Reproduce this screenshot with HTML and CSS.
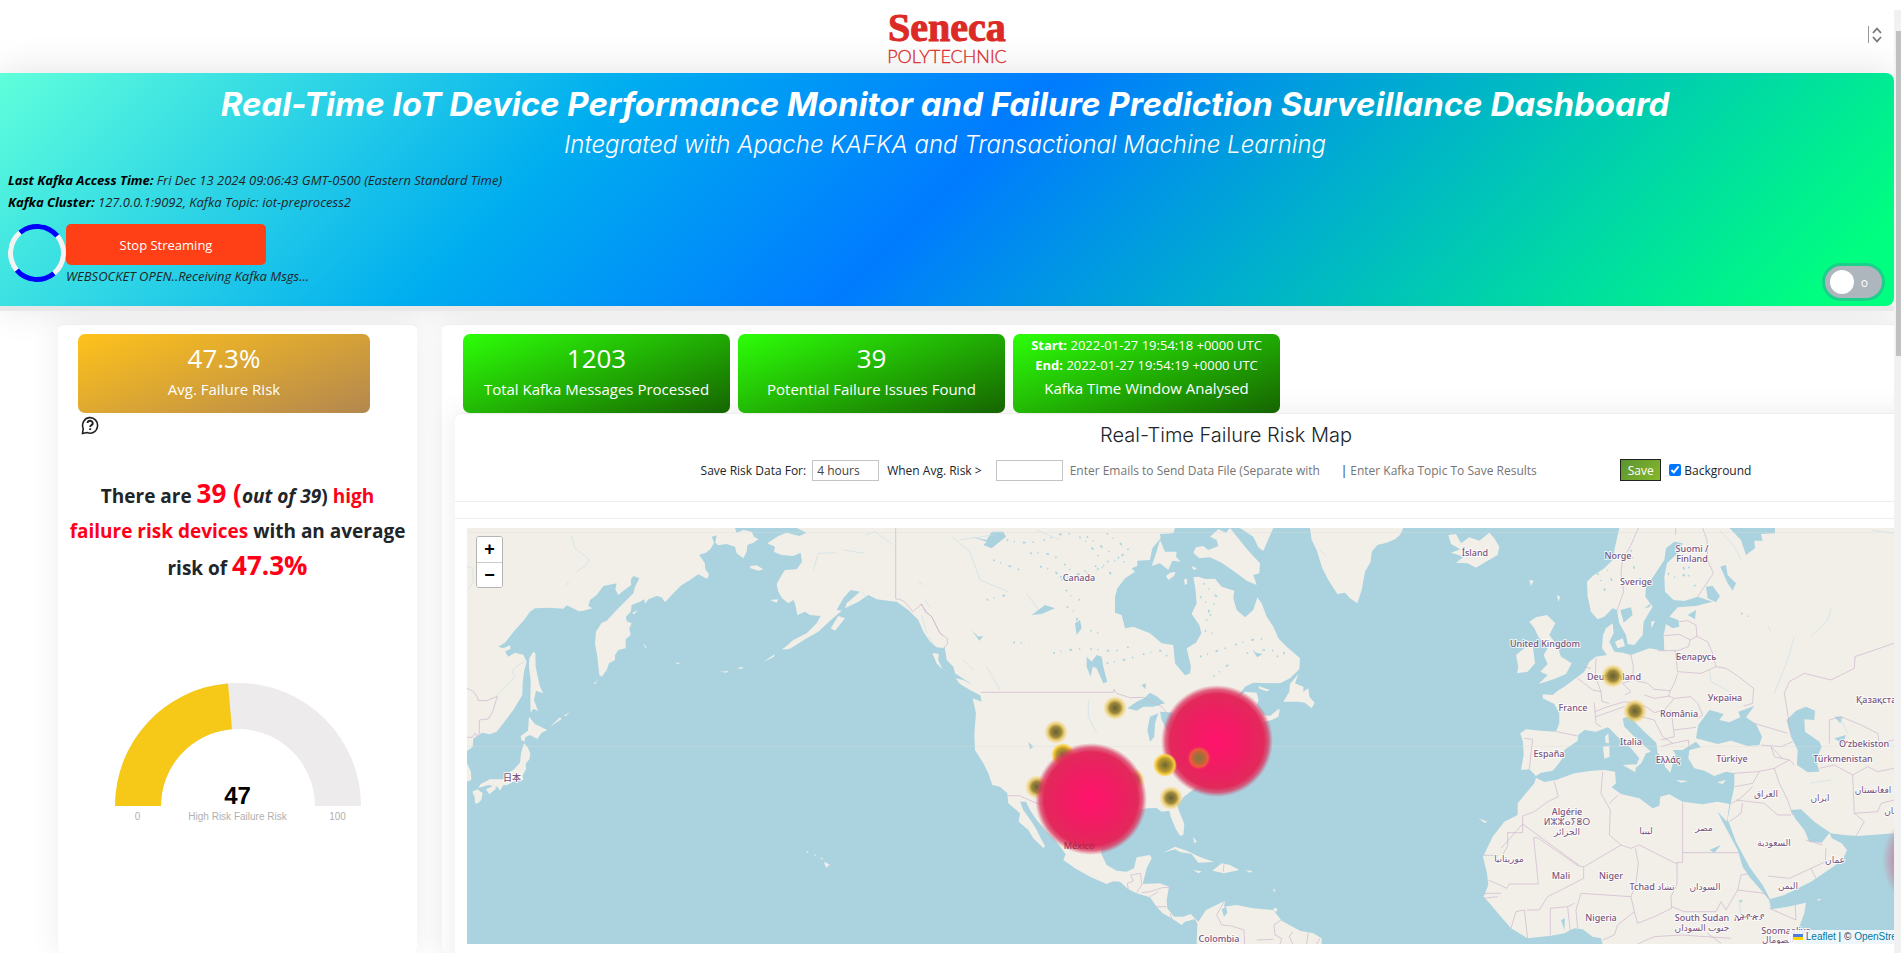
FILE: index.html
```html
<!DOCTYPE html>
<html lang="en">
<head>
<meta charset="utf-8">
<title>Real-Time IoT Device Performance Monitor</title>
<link rel="stylesheet" href="styles.css">
</head>
<body>
<div class="page">
<header class="topbar">
  <div class="logo"><span class="logo-name">Seneca</span><span class="logo-sub">POLYTECHNIC</span></div>
  <button class="sorter" aria-label="Toggle header">
    <svg width="15" height="18" viewBox="0 0 15 18" fill="none" stroke="#777"><path d="M1.500 0v17" stroke="#999"/><path d="M6 7 10 2.500 14 7M6 11 10 15.500 14 11" stroke-width="1.800"/></svg>
  </button>
</header>

<section class="banner">
  <h1>Real-Time IoT Device Performance Monitor and Failure Prediction Surveillance Dashboard</h1>
  <h2>Integrated with Apache KAFKA and Transactional Machine Learning</h2>
  <p class="meta"><b>Last Kafka Access Time:</b> Fri Dec 13 2024 09:06:43 GMT-0500 (Eastern Standard Time)</p>
  <p class="meta"><b>Kafka Cluster:</b> 127.0.0.1:9092, Kafka Topic: iot-preprocess2</p>
  <div class="stream">
    <span class="spinner"></span>
    <div>
      <button class="stop">Stop Streaming</button>
      <p class="status">WEBSOCKET OPEN..Receiving Kafka Msgs...</p>
    </div>
    <button class="toggle" role="switch" aria-checked="false" aria-label="Auto mode"><span class="knob"></span><span>o</span></button>
  </div>
</section>
<div class="strip"></div>

<main class="columns">
  <aside class="card side">
    <div class="tile amber"><strong>47.3%</strong><span>Avg. Failure Risk</span></div>
    <svg class="help" width="18" height="19" viewBox="0 0 18 19" fill="none" stroke="#222" stroke-width="1.600"><path d="M1.500 17.500 2.200 12.500A7.500 7.800 0 1 1 6 16.500Z"/><path d="M6.500 7a2.600 2.400 0 1 1 3.600 2.300Q9.200 9.700 9.200 11M9.200 12.200v1.800" stroke-width="1.900"/></svg>
    <p class="summary">There are <span class="hot big">39 (</span><i>out of 39</i>) <span class="hot">high<br>failure risk devices</span> with an average<br>risk of <span class="hot big">47.3%</span></p>
    <div class="gauge">
      <svg width="248" height="124" viewBox="0 0 248 124">
        <path d="M1 124A123 123 0 0 1 247 124H201A77 77 0 0 0 47 124Z" fill="#edebeb"/>
        <path d="M1 124A123 123 0 0 1 114 1.400L118 47.200A77 77 0 0 0 47 124Z" fill="#f6c918"/>
      </svg>
      <b>47</b>
      <div class="scale"><span>0</span><span>High Risk Failure Risk</span><span>100</span></div>
    </div>
  </aside>

  <section class="card panel">
    <div class="tiles">
      <div class="tile green"><strong>1203</strong><span>Total Kafka Messages Processed</span></div>
      <div class="tile green"><strong>39</strong><span>Potential Failure Issues Found</span></div>
      <div class="tile green window"><small><b>Start:</b> 2022-01-27 19:54:18 +0000 UTC</small><small><b>End:</b> 2022-01-27 19:54:19 +0000 UTC</small><span>Kafka Time Window Analysed</span></div>
    </div>
    <div class="card mapcard">
      <h3>Real-Time Failure Risk Map</h3>
      <form class="saver">
        <label for="hours">Save Risk Data For:</label>
        <select id="hours" class="box"><option>4 hours</option></select>
        <label class="when" for="risk">When Avg. Risk &gt;</label>
        <input id="risk" class="box" type="text">
        <input class="plain emails" type="text" aria-label="Emails" placeholder="Enter Emails to Send Data File (Separate with">
        <span class="bar">|</span>
        <input class="plain topic" type="text" aria-label="Kafka topic" placeholder="Enter Kafka Topic To Save Results">
        <button class="save" type="button">Save</button>
        <input id="bg" type="checkbox" checked><label for="bg">Background</label>
      </form>
      <div class="rule"></div>
      <div class="map">
        <svg class="world" width="1518" height="416">
          <defs>
            <radialGradient id="hot"><stop offset="0" stop-color="#ff136c"/><stop offset=".5" stop-color="#ef1d62"/><stop offset=".84" stop-color="#e2295b"/><stop offset=".92" stop-color="#dc345e" stop-opacity=".75"/><stop offset="1" stop-color="#d84a6c" stop-opacity="0"/></radialGradient>
            <radialGradient id="faint"><stop offset="0" stop-color="#d8346a"/><stop offset=".6" stop-color="#d8346a" stop-opacity=".8"/><stop offset="1" stop-color="#d84a6c" stop-opacity="0"/></radialGradient>
            <radialGradient id="warm"><stop offset="0" stop-color="#665f35"/><stop offset=".45" stop-color="#9c8838"/><stop offset=".7" stop-color="#e8c65c" stop-opacity=".8"/><stop offset="1" stop-color="#f8d468" stop-opacity="0"/></radialGradient>
            <radialGradient id="bright"><stop offset="0" stop-color="#6f6631"/><stop offset=".55" stop-color="#b8982c"/><stop offset=".8" stop-color="#fbce3c"/><stop offset="1" stop-color="#f8d468" stop-opacity="0"/></radialGradient>
            <radialGradient id="ember"><stop offset="0" stop-color="#7a7a38"/><stop offset=".45" stop-color="#b5683a"/><stop offset=".75" stop-color="#f05a3c"/><stop offset="1" stop-color="#f0305c" stop-opacity="0"/></radialGradient>
          </defs>
          <g transform="scale(.33333) translate(-21 -24)">
            <g class="land">
              <path d="M21 24H825L830 38 850 30 875 35 882 50 896 58 880 68 862 75 860 95 850 115 830 100 825 80 800 72 775 76 766 68 770 46 755 50 762 68 752 86 738 98 718 104 722 112 734 128 736 148 747 162 742 177 715 163 690 180 664 196 640 220 615 247 605 232 590 228 565 238 555 251 553 238 540 245 515 255 512 275 498 290 500 304 515 310 508 325 512 345 497 358 497 385 475 390 465 405 465 420 447 430 440 450 425 470 418 465 412 410 405 370 408 335 425 308 440 302 465 275 490 250 520 220 525 200 538 175 520 168 512 180 514 195 490 212 475 225 466 208 470 190 430 198 410 225 390 240 385 258 398 265 370 272 356 274 345 268 320 256 310 266 270 263 225 265 210 275 190 303 165 330 135 368 115 380 130 385 150 376 152 386 135 395 145 410 165 398 190 404 200 425 192 455 188 490 187 525 160 570 130 610 110 635 90 643 66 638 50 650 40 655 38 680 21 693Z"/>
              <path d="M21 730 33 755 34 780 21 785ZM220 395 226 400 227 440 232 465 240 500 250 520 228 512 222 540 234 573 220 566 212 578 211 540 212 480 207 440 208 415ZM207 590 225 612 262 630 245 638 232 657 210 645 196 652 193 665 184 660 182 648 204 632ZM192 670 203 682 211 700 208 718 197 732 198 748 188 766 190 780 160 785 140 796 130 795 120 812 112 800 85 795 55 804 62 792 90 778 130 778 140 760 160 750 180 728 183 700ZM78 808 105 795 108 806 88 823ZM37 815 52 808 68 820 64 840 54 850 45 850 44 832ZM1092 1025 1110 1034 1098 1043ZM1038 994 1046 996 1042 1000ZM1062 1003 1070 1006 1066 1008ZM1080 1012 1090 1016 1086 1019Z"/>
              <path d="M517 278 535 270 522 283ZM870 138 890 136 910 148 895 152 872 145ZM930 240 955 238 950 248ZM1112 325 1135 288 1155 295 1125 332ZM400 492 415 478 405 492ZM270 620 300 592 305 597ZM310 588 330 576 318 588ZM965 388 990 375 985 388ZM910 425 945 402 940 412ZM780 455 805 453 800 458ZM830 445 850 440 845 447ZM550 370 560 382 556 384ZM645 428 660 428 655 433Z"/>
            </g>
            <path class="land" d="M1500 24H1010L1040 38 1018 48 980 38 955 48 922 70 945 80 942 96 965 105 1000 108 1022 98 1026 125 1010 148 975 150 965 165 950 192 955 215 966 235 985 250 1000 240 1005 250 1012 285 1035 275 1050 285 1082 288 1070 310 1058 322 1040 340 1000 360 968 388 990 386 1040 355 1075 335 1110 302 1145 272 1130 270 1150 235 1172 210 1200 215 1160 250 1155 265 1195 245 1225 225 1250 238 1290 243 1310 245 1345 270 1375 300 1390 335 1410 365 1430 382 1455 385 1460 410 1480 430 1500 450Z"/>
            <path class="land" d="M1418 400 1436 402 1434 420 1447 447 1430 430Z"/>
            <g class="edge"><path d="M1307 24V237Q1330 232 1358 275L1386 252 1395 275 1415 290 1440 340 1462 355V372L1452 384M21 505Q50 515 55 542H80L112 529 98 575 85 597 58 600V640L50 650 45 640 36 652H21"/></g>
            <g class="river"><path d="M335 48 345 85 388 118 380 135 350 155M328 185 315 197M21 140 38 145 40 185 25 208M195 425Q140 450 165 470L110 528M1060 150 1075 100 1130 98M1150 90 1215 100M1215 45 1245 35 1300 75M1375 185 1390 195M1395 240 1410 262M1385 285 1400 340M1405 350 1425 380M1205 215 1225 240M1460 30 1500 75"/></g>
          </g>
          <g transform="scale(.33333) translate(1359 -24)">
            <path class="land" d="M55 24H765L760 40 720 42 722 55 697 85 690 120 652 122 652 138 635 145 645 155 615 175 592 205 585 230V278L605 285 615 325 640 320 690 340 725 370 760 375 765 430 795 466 810 460 813 440 800 385 828 368 844 340 838 315 815 282 830 250 826 205 820 172 835 170 855 177 885 176 905 200 943 212 940 235 950 270 975 292 1000 270 1012 232 1025 250 1040 290 1060 320 1075 355 1100 380 1140 415 1138 448 1110 475 1080 490 1000 488 975 500 945 540 975 515 1010 518 1016 540 1010 556 1030 585 1050 588 1078 565 1070 582 1050 600 1020 610 985 625 950 650 930 680 900 720 860 775 825 805 790 832 772 855 776 870 793 912 790 945 780 947 768 928 752 890 748 872 725 875 710 864 680 865 640 875 600 880 560 920 545 960 543 1000 560 1035 590 1052 620 1055 642 1045 650 1012 690 1005 695 1015 680 1045 668 1092 720 1090 747 1100 740 1140 742 1165 762 1190 790 1190 812 1182 835 1205 858 1170 915 1142 912 1160 950 1155 1000 1165 1060 1170 1085 1202 1140 1232 1180 1240 1205 1255V1272H830L832 1215 825 1197 795 1205 785 1215 755 1195 728 1180 710 1160 690 1132 650 1120 625 1108 600 1085 580 1084 560 1092 510 1070 465 1045 430 1020 437 1003 410 965 385 940 350 900 330 870 318 845H300L310 870 335 905 350 930 360 950 375 978 370 984 340 955 325 930 296 905 300 880 265 850 262 820 240 800 217 795 205 760 190 730 165 690 163 640 168 580 158 535 185 545 180 520 150 490 105 460 100 440 80 420 75 385 60 300V200Z"/>
            <g class="land"><path d="M107 475 130 480 175 505 185 528 150 510 120 492ZM38 400 56 402 54 420 67 447 50 430ZM720 60 735 95 770 95 768 110 782 125 757 122 745 150 720 130 695 138 705 110ZM738 168 750 158 767 156 762 168 745 180ZM792 180 800 175 802 190 795 196ZM895 28 918 38 930 24 985 92 1020 130 1018 160 1000 165 1010 195 980 182 950 160 905 128 870 112 838 115 820 98 828 82 850 78 865 90 895 78 890 60 870 50ZM960 24H1060L1044 60 1030 93 1015 82 1000 50ZM1135 462 1125 490 1150 500 1150 515 1165 505 1168 530 1184 548 1175 565 1155 548 1135 545 1090 545 1108 515 1110 492ZM1015 498 1050 510 1040 514 1018 506ZM1030 605 1055 590 1080 567 1075 590 1055 600ZM1170 24H1450L1440 45 1425 58 1400 68 1372 75 1355 95 1352 125 1335 155 1325 210 1312 250 1290 235 1275 218 1252 222 1225 180 1207 145 1190 90 1175 60ZM730 998 765 980 800 992 838 1010 882 1026 835 1028 815 1002 780 996 765 988ZM877 1052 905 1030 930 1035 958 1050 912 1060ZM976 1051 998 1053 990 1058ZM820 1050 845 1054 835 1060ZM815 138 832 145 820 150ZM1062 1165 1072 1165 1070 1175 1060 1172ZM1060 1105 1066 1110 1062 1118ZM820 950 830 965 822 970Z"/></g>
            <g class="water"><path d="M622 565 650 545 672 535 690 518 712 530 735 550 700 560 670 560 650 572ZM690 590 715 580 705 610 703 650 690 665 682 630ZM720 575 760 578 755 610 745 640 725 600ZM500 410 515 425 530 405 545 410 550 440 562 485 550 490 530 445 518 440 512 470 500 440ZM335 285 375 255 405 265 365 282ZM155 50 200 60 215 35 250 35 258 50 215 85 190 75 200 65ZM325 665 340 680 330 688ZM465 310 480 300 485 325 470 345ZM905 1168 918 1160 922 1178 912 1190ZM665 495 678 490 676 508ZM1000 395 1015 400 1028 402 1012 412ZM958 230 968 232 962 240ZM155 330 175 350 190 348 178 362Z"/></g>
            <g class="lakes"><path d="M260 60Q330 80 400 50T520 90 620 90M330 100Q400 90 440 140T560 130M360 140Q420 150 430 190T480 240M200 240 260 225M420 170Q460 180 500 150T580 170M440 260Q480 280 470 300T540 340M280 368H330M400 400Q470 380 540 390T640 370M560 430Q620 420 680 400T740 410M840 230Q880 260 860 300T880 340M840 410Q900 390 960 370T1050 360M980 400Q1020 380 1100 400M850 190 890 230 870 290M500 50 620 130M560 40 640 100M220 120 300 150M880 470 930 430M1070 410 1120 390"/></g>
            <g class="river"><path d="M95 50 150 95 180 180 265 215M320 220 355 270M120 60 220 45M505 540V590L530 640M130 420 160 450M200 440 240 510M1200 90 1220 110M350 30 420 60"/></g>
            <g class="edge"><path d="M0 250Q15 265 18 275L35 290 60 340 82 355V372L72 384M182 517H580L582 508 590 520 630 533 670 532 725 560 757 600 750 650 745 690M265 827H298L350 850H385M625 1108 622 1090 640 1083 632 1065 662 1060 665 1095 650 1118M665 1118 690 1115 730 1102 747 1103M690 1130 715 1115M710 1160H740M750 1180 755 1195M912 1145 890 1185 905 1215 935 1218 972 1230 974 1272M1083 1200 1062 1215 1065 1245 1085 1255 1080 1272M1118 1235 1108 1250 1118 1272M1165 1238 1160 1272M1010 1260 1060 1258M912 1033 910 1055M825 1200 832 1215M1200 1255 1190 1272"/></g>
          </g>
          <g transform="scale(.33333) translate(2802 -24)">
            <path class="land" d="M655 24H1752V1000L1600 960 1479 940 1370 948 1330 945 1290 940 1240 905 1200 868 1170 870 1182 895 1210 930 1225 965 1262 968 1286 938 1292 955 1322 970 1338 990 1325 1020 1290 1045 1230 1085 1150 1125 1107 1137 1085 1095 1045 1040 1005 965 980 898 990 845 1000 800V760L975 755 940 768 910 752 880 745 862 715 865 690 900 682 885 665 845 690 815 690 825 705 812 715 832 722 815 732 808 758 792 740 788 715 770 700 766 668 735 640 705 610 690 588 665 595 670 620 700 650 750 695 735 700 722 728 700 748 715 715 690 685 650 650 625 625 620 622 585 635 550 630 532 645 530 662 490 690 488 710 470 735 455 752 420 758 405 768 385 748 360 750 368 705 366 665 358 640 375 628 420 632 465 635 475 610 475 580 460 552 425 535 425 523 455 525 470 512 490 500 510 485 530 470 550 455 565 425 585 410 618 405 603 385 606 345 615 325 635 310 638 340 625 365 640 395 665 398 690 405 745 385 790 392 788 345 795 312 815 325 835 320 832 300 805 290 830 262 885 258 935 245 890 230 850 243 818 240 792 215 790 170 798 130 835 95 845 70 820 65 795 85 790 120 760 165 735 200 733 230 755 260 740 285 728 305 725 345 700 375 680 372 675 345 655 310 648 270 635 265 610 290 590 298 570 275 560 230 558 185 575 168 610 145 640 115 640 90Z"/>
            <g class="land"><path d="M142 45 165 42 180 70 205 52 235 62 265 38 280 55 295 80 290 105 255 125 225 143 200 130 165 128 188 110 150 98 178 88 150 72ZM405 292 438 285 463 310 445 345 468 375 480 410 512 430 495 462 460 477 413 492 440 465 418 455 440 432 428 405 440 385 412 350 400 325 385 305ZM370 385 395 375 402 430 380 455 348 460 352 440 345 405ZM665 735 705 733 703 757ZM606 680 625 677 626 710 610 716ZM612 650 622 640 624 670 614 668ZM825 780 862 783 840 788ZM948 787 975 780 965 792ZM642 365 665 355 672 378 650 385ZM750 305 762 302 752 325ZM385 180 398 182 390 198ZM468 225 478 230 472 245ZM1248 1137 1262 1138 1252 1142ZM232 895 260 905 250 908Z"/></g>
            <path class="land" d="M405 773 430 786 465 780 520 760 575 752 610 750 642 755 645 790 632 802 660 822 715 835 755 865 775 857 778 830 805 823 845 845 905 853 950 845 985 852 978 905 950 875 965 905 1010 990 1025 1040 1045 1070 1080 1110 1104 1138 1110 1168 1160 1160 1215 1148 1210 1180 1195 1220 1165 1272H605L600 1255 575 1250 545 1228 520 1225 490 1240 450 1247 380 1255 330 1225 300 1190 262 1145 248 1130 262 1095 258 1060 246 1010 275 950 310 905 350 885 350 850 375 820 400 790Z"/>
            <g class="water"><path d="M1157 600 1185 572 1215 560 1242 572 1240 600 1210 598 1212 635 1255 665 1262 680 1245 720 1255 755 1220 757 1188 735 1190 690 1170 650ZM985 24H1122V40L1080 42 1085 62 1060 62 1062 85 1035 105 1020 60ZM915 200 935 198 957 228 945 247 920 235ZM958 140 975 135 980 165 1005 190 995 212 980 190ZM885 655 892 615 925 570 945 575 968 582 955 600 985 607 1018 592 1012 575 1060 558 1035 592 1065 612 1083 650 1075 675 1040 678 990 662 950 672ZM658 270 690 262 695 285 668 308ZM860 285 885 270 882 298ZM480 1200 492 1195 490 1230ZM1300 655 1335 645 1325 672ZM1015 1140 1025 1140 1020 1150ZM925 990 960 975 940 998ZM1300 590 1325 590 1318 610ZM730 265 750 250 745 262Z"/></g>
            <g class="lakes"><path d="M800 160Q840 190 860 150T910 130M590 160 620 230M610 130 640 200M820 100 890 210M690 90 700 150M1020 280 1045 290"/></g>
            <g class="river"><path d="M925 450 930 485 985 515M1180 350 1160 420 1120 520M1290 265 1280 300 1230 350M955 30 1000 80 1020 120M1315 590 1340 640M1100 315 1108 335M1410 30 1479 40M1225 790 1290 780M1015 1140 1020 1200"/></g>
            <g class="edge"><path d="M712 24 690 75 665 120 660 160 668 215 648 272M824 24V45M905 24 918 60 920 120 937 160 890 230M834 305 860 302 885 315 888 348 868 360 835 343 790 347M868 360 862 380 830 392 770 392M885 348 905 358 920 365 935 400 945 440 900 460 830 455 822 392M690 405 697 440 695 480 665 490 690 515 672 525M697 480 740 490 760 508 808 512 820 490 830 460M945 440 975 445 1010 468 1058 505 1055 550 1028 558M808 512 803 528 820 535 870 530 890 550 905 585 890 595M730 525 760 535 805 528M820 535 790 570 760 578 735 560 672 545 620 560 582 575M585 415 583 470 600 515 603 545 625 550M530 475 575 510 600 515M545 440 570 445M580 548 585 610 600 620M585 590 670 560M467 635 530 648M370 655 395 658 390 700 385 748M700 585 760 600 785 650 815 670M810 570 818 630 885 622M818 630 820 650 780 660M865 690 862 660 815 670 780 680M1160 640 1060 610M1080 675 1140 680 1175 665M1110 680 1120 710 1165 720 1180 735M1110 680 1145 715M998 760 1070 755 1120 745 1165 720M1120 745 1135 790 1160 840 1175 885M1002 800 1055 790 1075 755M990 850 1015 838 1055 800M1005 840 1090 850 1130 885 1170 885M985 905 1020 880 1025 850M1170 640 1150 520 1165 485 1210 460 1290 480 1360 445 1362 410 1479 370M1285 670V600L1320 590 1380 615 1430 640 1435 670 1479 660M1255 745 1300 735 1355 765 1360 880 1390 905 1365 948M1355 765 1400 740 1430 755 1479 745M1360 880 1430 875 1440 850 1479 840M460 785 472 830 440 845 400 875 365 888V912L300 985M365 912 540 1040H550L660 975 625 945 628 870 600 820 605 755M625 850 652 825M660 975 690 985 715 975 828 1032M845 847V1027H828V1092L810 1130 812 1165M845 998H1012M320 938H365V912M320 935V978L305 1005M248 1006H290M410 953H398L412 1092H325L318 1105 262 1080M410 953 535 1040M548 1042V1075L490 1105 440 1130 415 1170M703 985 712 1030 705 1090 690 1130 540 1120 525 1170 530 1225M690 1130 700 1175 650 1215 640 1245 605 1260M700 1175 710 1210 760 1190 812 1165M812 1160 850 1175 945 1175 960 1145 975 1170 1010 1110 1020 1065 1040 1062M1010 1110 1090 1120 1105 1140M1105 1165 1185 1200 1183 1155M1100 1068 1165 1075 1230 1045 1285 1020M1230 1045 1245 1075M1275 985 1273 1020M1215 960 1265 975M250 1120H300M250 1135 290 1130M330 1225 345 1175 370 1170 380 1255M448 1245V1165L500 1160 508 1235M500 1160 520 1150M415 1170H378M710 1272 760 1250 840 1245 990 1255M920 1240 960 1270"/></g>
          </g>
          <path class="grid" d="M0 4.500H1518M0 218.500H1518"/>
          <g class="labels">
            <text x="45" y="253">日本</text>
            <text x="612" y="53">Canada</text><text x="752" y="414">Colombia</text>
            <text x="1008" y="28">Ísland</text><text x="1151" y="31">Norge</text><text x="1225" y="24">Suomi /</text><text x="1225" y="34">Finland</text><text x="1169" y="57">Sverige</text>
            <text x="1078" y="119">United Kingdom</text><text x="1229" y="132">Беларусь</text><text x="1147" y="152">Deutschland</text><text x="1106" y="183">France</text><text x="1258" y="173">Україна</text><text x="1212" y="189">România</text><text x="1412" y="175">Қазақстан</text>
            <text x="1164" y="217">Italia</text><text x="1082" y="229">España</text><text x="1201" y="235">Ελλάς</text><text x="1265" y="234">Türkiye</text><text x="1397" y="219">Oʻzbekiston</text><text x="1376" y="234">Türkmenistan</text>
            <text x="1299" y="269">العراق</text><text x="1353" y="273">ايران</text><text x="1406" y="265">افغانستان</text><text x="1432" y="286">پاکستان</text>
            <text x="1100" y="287">Algérie</text><text x="1100" y="297">ⵍⵣⵣⴰⵢⴻⵔ</text><text x="1100" y="307">الجزائر</text><text x="1179" y="306">ليبيا</text><text x="1237" y="303">مصر</text><text x="1307" y="318">السعودية</text><text x="1042" y="334">موريتانيا</text><text x="1368" y="335">عمان</text>
            <text x="1094" y="351">Mali</text><text x="1144" y="351">Niger</text><text x="1185" y="362">Tchad تشاد</text><text x="1238" y="362">السودان</text><text x="1321" y="361">اليمن</text><text x="1134" y="393">Nigeria</text><text x="1235" y="393">South Sudan</text><text x="1235" y="403">جنوب السودان</text><text x="1282" y="392">ኢትዮጵያ</text><text x="1319" y="406">Soomaaliya</text><text x="1311" y="415">الصومال</text>
          </g>
          <g>
            <circle cx="648" cy="180" r="12" fill="url(#warm)"/>
            <circle cx="589" cy="204" r="12" fill="url(#warm)"/>
            <circle cx="596" cy="227" r="12" fill="url(#bright)"/>
            <circle cx="570" cy="259" r="12" fill="url(#warm)"/>
            <circle cx="666" cy="252" r="12" fill="url(#warm)"/>
            <circle cx="704" cy="270" r="12" fill="url(#warm)"/>
            <circle cx="624" cy="271" r="56" fill="url(#hot)"/>
            <circle cx="750" cy="213" r="56" fill="url(#hot)"/>
            <circle cx="698" cy="237" r="12" fill="url(#bright)"/>
            <circle cx="732" cy="230" r="12" fill="url(#ember)"/>
            <circle cx="1146" cy="148" r="12" fill="url(#warm)"/>
            <circle cx="1168" cy="183" r="12" fill="url(#warm)"/>
            <circle cx="1471" cy="332" r="56" fill="url(#faint)"/>
          </g>
          <g class="labels veiled"><text x="612" y="321">México</text></g>
        </svg>
        <div class="zoomer"><button aria-label="Zoom in">+</button><button aria-label="Zoom out">−</button></div>
        <div class="credit"><svg width="10" height="6" viewBox="0 0 10 6"><path d="M0 0h10v3H0z" fill="#4c7be1"/><path d="M0 3h10v3H0z" fill="#ffd500"/></svg> <a href="#">Leaflet</a> | © <a href="#">OpenStreetMap</a> contributors</div>
      </div>
    </div>
  </section>
</main>
</div>
<div class="scroll"><span></span></div>
</body>
</html>
```
FILE: styles.css
```css
* { box-sizing: border-box; }
html, body { height: 100%; }
body {
  margin: 0;
  display: flex;
  overflow: hidden;
  background: #fff;
  color: #212529;
  font-family: "Open Sans", "Noto Sans", sans-serif;
  font-size: 13px;
}
p, h1, h2, h3 { margin: 0; }
button { font-family: inherit; padding: 0; border: 0; cursor: pointer; }

.page { flex: 1; min-width: 0; overflow: hidden; display: flex; flex-direction: column; }
.scroll { width: 7px; margin-top: 10px; padding: 21px 0 0 2px; background: #f1f1f1; }
.scroll span { display: block; height: 325px; background: #c1c1c1; }

.topbar { height: 73px; flex: none; display: grid; grid-template-columns: 1fr auto 1fr; align-items: start; }
.logo { grid-column: 2; display: flex; flex-direction: column; align-items: center; padding-top: 8px; color: #dc2a26; position: relative; z-index: 1; }
.logo-name { font: bold 40px/39px "Liberation Serif", serif; -webkit-text-stroke: 1px #dc2a26; }
.logo-sub { font: 18px/18px Lato, sans-serif; font-weight: 300; -webkit-text-stroke: 0.3px #dc2a26; }
.sorter { justify-self: end; margin: 26px 12px 0 0; height: 18px; background: none; }

.banner {
  flex: none;
  display: flex;
  flex-direction: column;
  padding: 11px 12px 8px 8px;
  min-height: 233px;
  border-radius: 0 8px 8px 0;
  background: linear-gradient(135deg, #5fffdb 0%, #00adef 30%, #007bff 50%, #00ff80 96%);
  box-shadow: 0 0 40px rgba(0, 0, 0, .12);
}
.banner h1 { font: italic bold 33px/40px Inter, sans-serif; color: #fff; text-align: center; }
.banner h2 { font: italic 300 24px/30px Inter, sans-serif; color: #fff; text-align: center; padding: 6px 0 9px; }
.meta { font-style: italic; font-size: 13px; line-height: 22px; }
.meta b { color: #000; }
.stream { flex: 1; display: flex; align-items: flex-start; margin-top: 11px; }
.spinner { width: 58px; height: 58px; border: 5px solid #f3f3f3; border-top-color: #00f; border-bottom-color: #00f; border-radius: 50%; transform: rotate(5deg); }
.stop { width: 200px; height: 41px; border-radius: 5px; background: #ff4017; color: #fff; font-size: 13px; }
.status { font-style: italic; font-size: 13px; line-height: 22px; }
.toggle { margin: auto 0 0 auto; width: 57px; height: 32px; padding: 0 14px 0 5px; border-radius: 16px; display: flex; align-items: center; justify-content: space-between; background: #adb5bd; color: #fff; font-size: 12px; box-shadow: 0 0 0 3px rgba(60, 150, 150, .45); }
.knob { width: 24px; height: 24px; border-radius: 50%; background: #fff; }
.strip { flex: none; height: 5px; background: #e8e8e8; position: relative; z-index: 1; }

.columns { flex: 1; display: grid; grid-template-columns: 359px minmax(0, 1fr); gap: 25px; padding: 13px 0 0 58px; }
.card { background: #fff; border-top: 1px solid #eee; border-radius: 6px; box-shadow: 0 0 30px rgba(0, 0, 0, .08); }
.side { padding: 9px 0 0; }
.tile { height: 79px; border-radius: 7px; color: #fff; text-align: center; display: flex; flex-direction: column; align-items: center; }
.tile strong { font-weight: 400; font-size: 26px; line-height: 36px; margin-top: 6px; }
.tile span { font-size: 15px; line-height: 26px; }
.tile small { font-size: 13px; line-height: 20px; }
.window { padding-top: 1px; }
.amber { width: 292px; margin-left: 20px; background: linear-gradient(160deg, #ffc21a, #b3874f); }
.green { width: 267px; background: linear-gradient(160deg, #2dff08, #166400); }
.help { display: block; margin: 3px 0 0 23px; }
.summary { margin-top: 42px; text-align: center; font-weight: 700; font-size: 19px; line-height: 35px; }
.hot { color: #ff0018; }
.big { font-size: 26px; line-height: 32px; }
.gauge { margin-top: 96px; text-align: center; font-family: "Liberation Sans", Arial, sans-serif; display: flex; flex-direction: column; align-items: center; }
.gauge b { font-size: 24px; line-height: 24px; margin-top: -22px; color: #000; }
.scale { width: 248px; display: grid; grid-template-columns: 48px 1fr 48px; font-size: 10px; line-height: 12px; margin-top: 3px; color: #b0b0b0; }

.panel { margin-right: -116px; padding: 9px 13px 0; min-width: 0; }
.tiles { display: flex; gap: 8px; padding-left: 8px; }
.mapcard { height: 100%; }
.mapcard h3 { font: 300 20px/28px Inter, sans-serif; text-align: center; padding-top: 7px; }
.saver { display: flex; justify-content: center; align-items: center; height: 42px; color: #212529; font-size: 12px; margin-bottom: 10px; }
.saver input, .saver select { font-family: inherit; font-size: 12px; margin: 0; }
.box { width: 67px; height: 21px; border: 1px solid #c4c4c4; border-radius: 0; background: #fff; appearance: none; color: #444; padding: 0 4px; }
.saver #hours { margin-left: 6px; }
.when { margin: 0 14px 0 8px; }
.plain { border: 0; padding: 0; background: none; outline: 0; }
.saver .emails { width: 268px; margin-left: 7px; }
.bar { margin: 0 3px; }
.topic { width: 270px; }
.save { width: 41px; height: 22px; background: linear-gradient(135deg, #5c9430, #86b82c); border: 1px solid #222; color: #fff; font-size: 12px; }
.saver #bg { width: 12px; height: 12px; margin: 0 3px 0 8px; accent-color: #0075ff; }
.rule { height: 18px; border-top: 1px solid #eee; border-bottom: 1px solid #eee; margin-bottom: 9px; }
.map { margin: 0 12px; height: 416px; position: relative; background: #aad3df; overflow: hidden; }
.world { display: block; }
.land { fill: #f2efe9; }
.water { fill: #aad3df; }
.lakes { fill: none; stroke: #aad3df; stroke-width: 5; stroke-dasharray: 5 17 3 24 8 21 4 30; }
.river { fill: none; stroke: #c9e0e6; stroke-width: 2; }
.edge { fill: none; stroke: #cbb4cb; stroke-width: 2; }
.grid { fill: none; stroke: #e0dcdc; opacity: .35; }
.labels { font: 500 9px "Noto Sans", "DejaVu Sans", "Noto Sans CJK JP", sans-serif; text-anchor: middle; fill: #7a5580; stroke: #fff; stroke-width: 2px; stroke-opacity: .75; paint-order: stroke; }
.veiled { fill: #a8294f; stroke: none; }
.zoomer { position: absolute; left: 9px; top: 8px; width: 27px; height: 52px; border: 1px solid #b5b5b0; border-radius: 3px; background: #fff; display: flex; flex-direction: column; overflow: hidden; }
.zoomer button { flex: 1; background: #fff; font: bold 18px/20px "Liberation Sans", Arial, sans-serif; color: #000; }
.zoomer button + button { border-top: 1px solid #ccc; }
.credit { position: absolute; left: 1322px; right: 0; bottom: 0; height: 14px; padding: 0 4px; background: rgba(255, 255, 255, .8); font: 10px/14px "Liberation Sans", Arial, sans-serif; color: #333; white-space: nowrap; }
.credit a { color: #0078a8; text-decoration: none; }
```
